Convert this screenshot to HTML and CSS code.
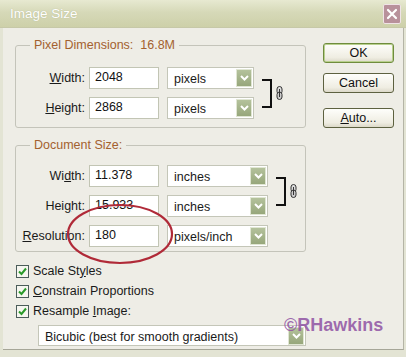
FILE: index.html
```html
<!DOCTYPE html>
<html lang="en">

<head>
    <meta charset="UTF-8">
    <meta name="viewport" content="width=device-width, initial-scale=1.0">
    <title>Image Size</title>
    <link rel="stylesheet" href="styles.css">
</head>

<body>
    <div class="window">
        <div class="titlebar">
            <span class="title">Image Size</span>
            <button class="close" type="button" aria-label="Close">
                <svg width="12" height="12" viewBox="0 0 12 12"><path d="M2 2 L10 10 M10 2 L2 10" stroke="#fff" stroke-width="2.2" stroke-linecap="round"/></svg>
            </button>
        </div>

        <div class="content">
            <div class="main">
                <fieldset class="group">
                    <legend>Pixel Dimensions:&nbsp; 16.8M</legend>
                    <div class="grid">
                        <label class="lbl" for="pw"><u>W</u>idth:</label>
                        <input class="num" id="pw" type="text" value="2048">
                        <div class="dropdown"><span>pixels</span><i class="arrow"><svg width="9" height="6" viewBox="0 0 9 6"><polyline points="1,1 4.5,4.5 8,1" fill="none" stroke="#fff" stroke-width="2"/></svg></i></div>
                        <div class="link">
                            <span class="bracket"></span>
                            <svg class="chain" width="7" height="14" viewBox="0 0 7 14"><rect x="1" y="0.5" width="5" height="7.5" rx="2.5" fill="#ddd" stroke="#333"/><rect x="1" y="6" width="5" height="7.5" rx="2.5" fill="#ccc" stroke="#333"/><line x1="3.5" y1="3" x2="3.5" y2="11" stroke="#333"/></svg>
                        </div>

                        <label class="lbl" for="ph"><u>H</u>eight:</label>
                        <input class="num" id="ph" type="text" value="2868">
                        <div class="dropdown"><span>pixels</span><i class="arrow"><svg width="9" height="6" viewBox="0 0 9 6"><polyline points="1,1 4.5,4.5 8,1" fill="none" stroke="#fff" stroke-width="2"/></svg></i></div>
                    </div>
                </fieldset>

                <fieldset class="group doc">
                    <legend>Document Size:</legend>
                    <div class="grid">
                        <label class="lbl" for="dw">Wi<u>d</u>th:</label>
                        <input class="num" id="dw" type="text" value="11.378">
                        <div class="dropdown"><span>inches</span><i class="arrow"><svg width="9" height="6" viewBox="0 0 9 6"><polyline points="1,1 4.5,4.5 8,1" fill="none" stroke="#fff" stroke-width="2"/></svg></i></div>
                        <div class="link">
                            <span class="bracket"></span>
                            <svg class="chain" width="7" height="14" viewBox="0 0 7 14"><rect x="1" y="0.5" width="5" height="7.5" rx="2.5" fill="#ddd" stroke="#333"/><rect x="1" y="6" width="5" height="7.5" rx="2.5" fill="#ccc" stroke="#333"/><line x1="3.5" y1="3" x2="3.5" y2="11" stroke="#333"/></svg>
                        </div>

                        <label class="lbl" for="dh">Hei<u>g</u>ht:</label>
                        <input class="num" id="dh" type="text" value="15.933">
                        <div class="dropdown"><span>inches</span><i class="arrow"><svg width="9" height="6" viewBox="0 0 9 6"><polyline points="1,1 4.5,4.5 8,1" fill="none" stroke="#fff" stroke-width="2"/></svg></i></div>

                        <label class="lbl" for="res"><u>R</u>esolution:</label>
                        <input class="num" id="res" type="text" value="180">
                        <div class="dropdown"><span>pixels/inch</span><i class="arrow"><svg width="9" height="6" viewBox="0 0 9 6"><polyline points="1,1 4.5,4.5 8,1" fill="none" stroke="#fff" stroke-width="2"/></svg></i></div>
                    </div>
                </fieldset>

                <div class="checks">
                    <div class="check"><span class="box"><svg width="9" height="9" viewBox="0 0 9 9"><polyline points="1,4.5 3.5,7 8,1.5" fill="none" stroke="#2a9a2a" stroke-width="2"/></svg></span><span>Scale St<u>y</u>les</span></div>
                    <div class="check"><span class="box"><svg width="9" height="9" viewBox="0 0 9 9"><polyline points="1,4.5 3.5,7 8,1.5" fill="none" stroke="#2a9a2a" stroke-width="2"/></svg></span><span><u>C</u>onstrain Proportions</span></div>
                    <div class="check"><span class="box"><svg width="9" height="9" viewBox="0 0 9 9"><polyline points="1,4.5 3.5,7 8,1.5" fill="none" stroke="#2a9a2a" stroke-width="2"/></svg></span><span>Resample <u>I</u>mage:</span></div>
                </div>

                <div class="dropdown method"><span>Bicubic (best for smooth gradients)</span><i class="arrow"><svg width="9" height="6" viewBox="0 0 9 6"><polyline points="1,1 4.5,4.5 8,1" fill="none" stroke="#fff" stroke-width="2"/></svg></i></div>
            </div>

            <div class="buttons">
                <button class="btn default" type="button">OK</button>
                <button class="btn" type="button">Cancel</button>
                <button class="btn auto" type="button"><u>A</u>uto...</button>
            </div>
        </div>

        <svg class="circle" width="406" height="357" viewBox="0 0 406 357"><ellipse cx="120" cy="234" rx="52" ry="29" fill="none" stroke="#b02a38" stroke-width="2.2"/></svg>
        <span class="watermark">&copy;RHawkins</span>
    </div>
</body>

</html>
```

FILE: styles.css
```css
* {
    box-sizing: border-box;
}

body {
    margin: 0;
    font-family: "Liberation Sans", Arial, sans-serif;
    font-size: 12.5px;
    color: #1a1a1a;
    background-color: #e3e4d4;
}

.window {
    position: relative;
    width: 406px;
    height: 357px;
    background-color: #e3e4d4;
    overflow: hidden;
}

.titlebar {
    height: 28px;
    display: flex;
    align-items: center;
    justify-content: space-between;
    padding: 0 5px 0 10px;
    background: linear-gradient(#e7e9d1, #d6d9b8 45%, #cdd0a9);
    border-bottom: 1px solid #c6c8a8;
}

.title {
    color: #fff;
    font-size: 13.5px;
    text-shadow: 0 0 1px #a8ab88;
}

.close {
    width: 18px;
    height: 20px;
    padding: 0;
    display: flex;
    align-items: center;
    justify-content: center;
    background-color: #b8919b;
    border: 1px solid #efe3e6;
    border-radius: 2px;
}

.content {
    display: flex;
    height: 322px;
    margin: 0 2px 0 3px;
    padding-top: 10px;
    background-color: #eeede6;
    border-right: 1px solid #b4b4a6;
    border-bottom: 1px solid #a6a698;
}

.main {
    width: 303px;
    padding-left: 12px;
}

.group {
    margin: 0;
    padding: 15px 0 8px;
    border: 1px solid #c4c4ba;
    border-radius: 3px;
}

.group legend {
    margin-left: 14px;
    padding: 0 4px;
    line-height: 14px;
    color: #a3612f;
}

.group.doc {
    margin-top: 10px;
    padding: 13px 0 4px;
}

.grid {
    display: grid;
    grid-template-columns: 73px 70px 95px auto;
    row-gap: 8px;
    align-items: center;
}

.doc .grid {
    grid-template-columns: 73px 70px 109px auto;
}

.lbl {
    text-align: right;
    padding-right: 4px;
    white-space: nowrap;
}

.num {
    width: 70px;
    height: 22px;
    padding: 0 0 2px 5px;
    font: inherit;
    color: #111;
    background-color: #fff;
    border: 1px solid #c2c5b4;
}

.dropdown {
    display: flex;
    align-items: center;
    height: 22px;
    margin-left: 8px;
    padding: 1px;
    background-color: #fff;
    border: 1px solid #c4c6b8;
}

.dropdown span {
    flex: 1;
    padding: 2px 0 0 5px;
    white-space: nowrap;
}

.arrow {
    width: 16px;
    height: 18px;
    display: flex;
    align-items: center;
    justify-content: center;
    background: linear-gradient(#b4c29c, #97a77b);
    border: 1px solid #e0e6d3;
}

.link {
    grid-row: span 2;
    display: flex;
    align-items: center;
    padding-left: 8px;
}

.bracket {
    width: 10px;
    height: 29px;
    border: 2px solid #111;
    border-left: none;
}

.chain {
    margin-left: 4px;
}

.checks {
    margin-top: 9px;
}

.check {
    display: flex;
    align-items: center;
    gap: 4px;
    height: 20px;
    padding-left: 1px;
}

.box {
    width: 13px;
    height: 13px;
    display: flex;
    align-items: center;
    justify-content: center;
    background-color: #f6f6f0;
    border: 1px solid #4c5d5a;
}

.dropdown.method {
    width: 268px;
    height: 21px;
    margin: 4px 0 0 23px;
}

.buttons {
    display: flex;
    flex-direction: column;
    margin-left: 17px;
    padding-top: 5px;
}

.btn {
    width: 71px;
    height: 20px;
    padding: 0;
    font: inherit;
    color: #111;
    background: linear-gradient(#fefefb, #efede2 75%, #dcd9c9);
    border: 1px solid #5d6140;
    border-radius: 3px;
}

.btn + .btn {
    margin-top: 10px;
}

.btn.auto {
    margin-top: 15px;
}

.btn.default {
    border-color: #6f8c3d;
    box-shadow: inset 0 0 0 1px #b9d08e;
}

.circle {
    position: absolute;
    left: 0;
    top: 0;
    pointer-events: none;
}

.watermark {
    position: absolute;
    left: 284px;
    top: 316px;
    font-size: 18px;
    line-height: 18px;
    font-weight: bold;
    color: rgba(143, 82, 163, 0.85);
}
```
